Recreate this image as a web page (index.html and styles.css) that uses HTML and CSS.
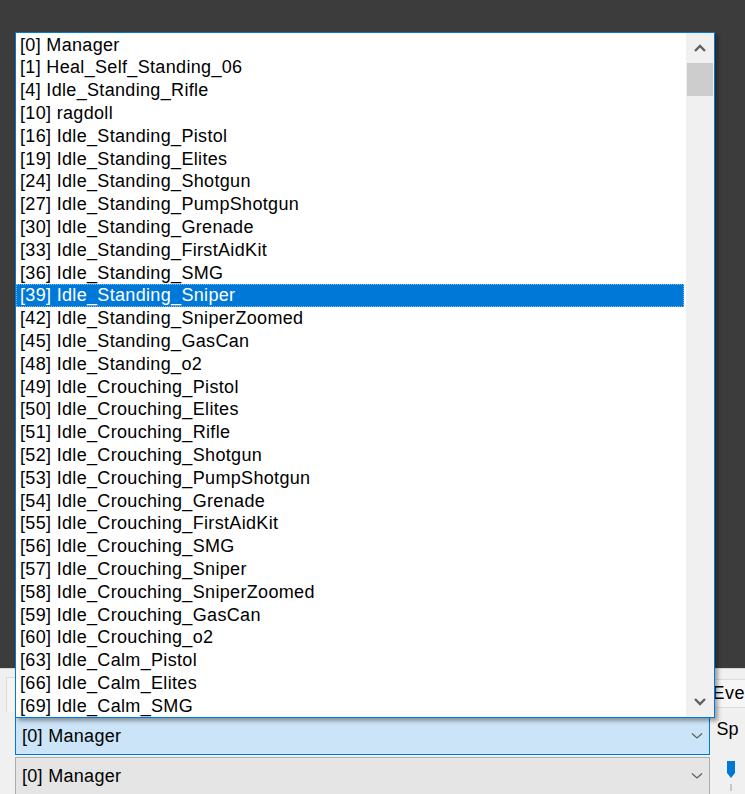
FILE: index.html
```html
<!DOCTYPE html>
<html>
<head>
<meta charset="utf-8">
<link rel="stylesheet" href="styles.css">
</head>
<body>
<div class="screen">
  <div class="dark"></div>
  <div class="panel">
    <div class="left-col"><div class="tabbox"></div></div>
    <div class="mid-col">
      <div class="combo active"><span class="ctext">[0] Manager</span><svg class="carrow" width="12" height="8" viewBox="0 0 12 8"><path d="M1 1.5 L6 6 L11 1.5" fill="none" stroke="#606060" stroke-width="1.3"/></svg></div>
      <div class="combo"><span class="ctext">[0] Manager</span><svg class="carrow" width="12" height="8" viewBox="0 0 12 8"><path d="M1 1.5 L6 6 L11 1.5" fill="none" stroke="#606060" stroke-width="1.3"/></svg></div>
    </div>
    <div class="right-col">
      <div class="evebox">Eve</div>
      <div class="sp">Sp</div>
      <div class="slider">
        <svg width="14" height="34" viewBox="0 0 14 34"><path d="M2 2 H10 V14 L6 19 L2 14 Z" fill="#0078d7"/><rect x="5.5" y="25" width="1" height="7" fill="#a0a0a0"/></svg>
      </div>
    </div>
  </div>

  <div class="popup">
    <ul class="items">
      <li>[0] Manager</li>
      <li>[1] Heal_Self_Standing_06</li>
      <li>[4] Idle_Standing_Rifle</li>
      <li>[10] ragdoll</li>
      <li>[16] Idle_Standing_Pistol</li>
      <li>[19] Idle_Standing_Elites</li>
      <li>[24] Idle_Standing_Shotgun</li>
      <li>[27] Idle_Standing_PumpShotgun</li>
      <li>[30] Idle_Standing_Grenade</li>
      <li>[33] Idle_Standing_FirstAidKit</li>
      <li>[36] Idle_Standing_SMG</li>
      <li class="sel">[39] Idle_Standing_Sniper</li>
      <li>[42] Idle_Standing_SniperZoomed</li>
      <li>[45] Idle_Standing_GasCan</li>
      <li>[48] Idle_Standing_o2</li>
      <li>[49] Idle_Crouching_Pistol</li>
      <li>[50] Idle_Crouching_Elites</li>
      <li>[51] Idle_Crouching_Rifle</li>
      <li>[52] Idle_Crouching_Shotgun</li>
      <li>[53] Idle_Crouching_PumpShotgun</li>
      <li>[54] Idle_Crouching_Grenade</li>
      <li>[55] Idle_Crouching_FirstAidKit</li>
      <li>[56] Idle_Crouching_SMG</li>
      <li>[57] Idle_Crouching_Sniper</li>
      <li>[58] Idle_Crouching_SniperZoomed</li>
      <li>[59] Idle_Crouching_GasCan</li>
      <li>[60] Idle_Crouching_o2</li>
      <li>[63] Idle_Calm_Pistol</li>
      <li>[66] Idle_Calm_Elites</li>
      <li>[69] Idle_Calm_SMG</li>
    </ul>
    <div class="scrollbar">
      <div class="sb-btn"><svg width="14" height="10" viewBox="0 0 14 10"><path d="M2 8 L7 3 L12 8" fill="none" stroke="#606060" stroke-width="2.4"/></svg></div>
      <div class="sb-track"><div class="sb-thumb"></div></div>
      <div class="sb-btn"><svg width="14" height="10" viewBox="0 0 14 10"><path d="M2 2 L7 7 L12 2" fill="none" stroke="#606060" stroke-width="2.4"/></svg></div>
    </div>
  </div>
</div>
</body>
</html>
```
FILE: styles.css
```css
html, body {
  margin: 0;
  padding: 0;
}
body {
  width: 745px;
  height: 794px;
  overflow: hidden;
  font-family: "Liberation Sans", Arial, sans-serif;
  color: #000;
}
.screen {
  position: relative;
  width: 745px;
  height: 794px;
  overflow: hidden;
  background: #f0f0f0;
}
.dark {
  height: 668px;
  background: #3c3c3c;
}
.panel {
  height: 126px;
  display: flex;
  background: #f0f0f0;
  border-top: 1px solid #d8d8d8;
}
.left-col {
  width: 15px;
  padding: 8px 0 0 6px;
  box-sizing: border-box;
}
.tabbox {
  height: 34px;
  border-left: 1px solid #dadada;
  border-top: 1px solid #dadada;
  background: #f4f4f4;
}
.mid-col {
  width: 699px;
  padding-top: 48px;
  display: flex;
  flex-direction: column;
  gap: 2px;
}
.combo {
  height: 38px;
  box-sizing: border-box;
  border: 1px solid #adadad;
  background: #e5e5e5;
  display: flex;
  align-items: center;
  padding: 0 6px 0 6px;
  font-size: 18px;
  letter-spacing: 0.3px;
}
.combo.active {
  border-color: #0078d7;
  background: #cce4f7;
}
.ctext {
  flex: 1;
}
.carrow {
  display: block;
}
.right-col {
  flex: 1;
  display: flex;
  flex-direction: column;
  font-size: 18px;
}
.evebox {
  margin-top: 10px;
  height: 29px;
  box-sizing: border-box;
  border: 1px solid #dcdcdc;
  border-right: none;
  background: #f6f6f6;
  padding-left: 1px;
  line-height: 27px;
  letter-spacing: 0.5px;
}
.sp {
  margin-top: 10px;
  padding-left: 6px;
  height: 22px;
  line-height: 22px;
}
.slider {
  margin-top: 19px;
  padding-left: 15px;
}
.slider svg {
  display: block;
}

/* popup list */
.popup {
  position: absolute;
  left: 15px;
  top: 32px;
  width: 700px;
  height: 686px;
  box-sizing: border-box;
  border: 1px solid #0078d7;
  background: #fff;
  display: flex;
  box-shadow: 3px 3px 4px rgba(0, 0, 0, 0.35);
}
.items {
  list-style: none;
  margin: 0;
  padding: 0.6px 0 0 0;
  flex: 1;
  overflow: hidden;
  font-size: 18px;
  letter-spacing: 0.33px;
}
.items li {
  height: 22.8px;
  line-height: 23.8px;
  padding-left: 4px;
  margin-right: 2px;
  white-space: nowrap;
}
.items li.sel {
  background: #0078d7;
  color: #fff;
  outline: 1px dotted #7fbbeb;
  outline-offset: -1px;
}
.scrollbar {
  width: 28px;
  background: #f0f0f0;
  display: flex;
  flex-direction: column;
}
.sb-btn {
  height: 30px;
  display: flex;
  align-items: center;
  justify-content: center;
}
.sb-track {
  flex: 1;
  padding: 0 1px;
}
.sb-thumb {
  height: 33px;
  background: #cdcdcd;
}
```
